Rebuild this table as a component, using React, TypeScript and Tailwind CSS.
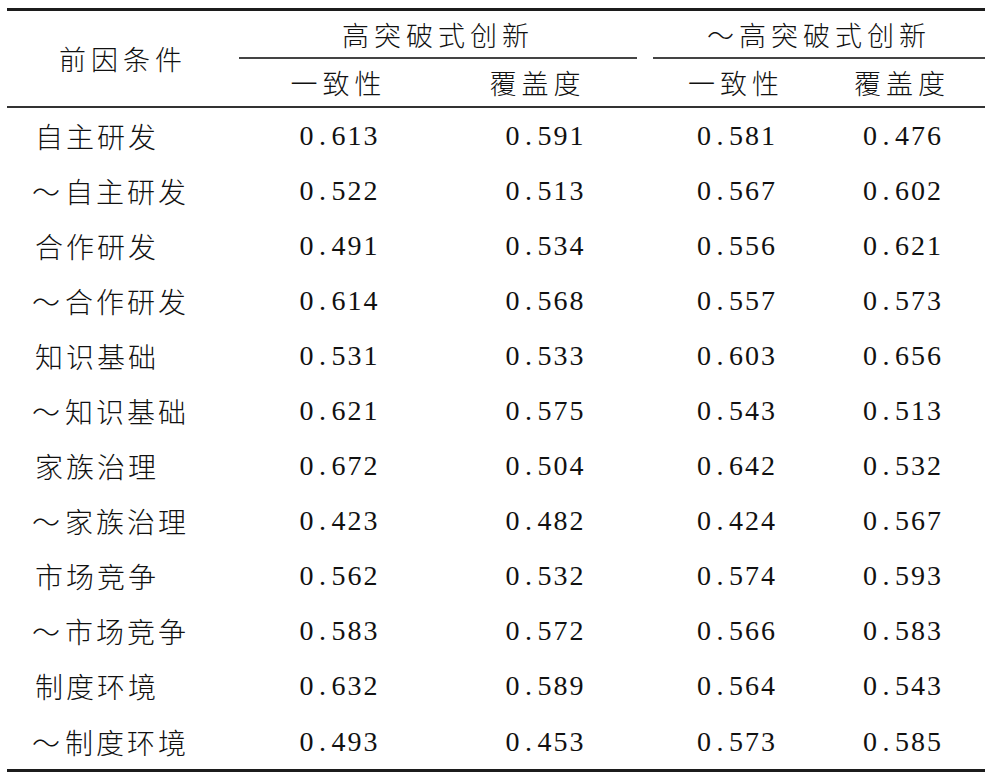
import React from "react";

const cjk = { fontFamily: '"Noto Sans CJK SC", "Noto Sans", sans-serif' };
const serif = { fontFamily: '"Liberation Serif", Tinos, "DejaVu Serif", serif' };

const rows: [string, string, string, string, string][] = [
  ["自主研发", "0.613", "0.591", "0.581", "0.476"],
  ["～自主研发", "0.522", "0.513", "0.567", "0.602"],
  ["合作研发", "0.491", "0.534", "0.556", "0.621"],
  ["～合作研发", "0.614", "0.568", "0.557", "0.573"],
  ["知识基础", "0.531", "0.533", "0.603", "0.656"],
  ["～知识基础", "0.621", "0.575", "0.543", "0.513"],
  ["家族治理", "0.672", "0.504", "0.642", "0.532"],
  ["～家族治理", "0.423", "0.482", "0.424", "0.567"],
  ["市场竞争", "0.562", "0.532", "0.574", "0.593"],
  ["～市场竞争", "0.583", "0.572", "0.566", "0.583"],
  ["制度环境", "0.632", "0.589", "0.564", "0.543"],
  ["～制度环境", "0.493", "0.453", "0.573", "0.585"],
];

function Num({ v }: { v: string }) {
  return (
    <span className="flex font-normal text-[28px] leading-none text-[#111]" style={serif}>
      {v.split("").map((c, i) => (
        <span key={i} className="inline-block w-4 text-center" style={serif}>
          {c}
        </span>
      ))}
    </span>
  );
}

function Label({ t }: { t: string }) {
  const tilde = t.startsWith("～");
  return (
    <span className="flex items-center text-[28px] font-light leading-none tracking-[3px] text-[#111]" style={cjk}>
      {tilde ? <span className="inline-block w-[33px] -ml-[3px]">～</span> : null}
      <span>{tilde ? t.slice(1) : t}</span>
    </span>
  );
}

const head = "flex items-center justify-center text-[27px] font-light leading-none tracking-[5px] text-[#111]";

export default function App() {
  return (
    <div className="min-h-[784px] w-[992px] bg-white pt-2 pl-[7px]">
      <div className="w-[978px]">
        <div className="h-[3px] bg-[#1c1c1c]" />
        <div className="grid grid-cols-[232px_199px_199px_16px_166px_166px] grid-rows-[46px_2px_47px]">
          <div className={`row-span-3 ${head}`} style={cjk}>
            前因条件
          </div>
          <div className={`col-span-2 ${head}`} style={cjk}>
            高突破式创新
          </div>
          <div />
          <div className={`col-span-2 ${head}`} style={cjk}>
            ～高突破式创新
          </div>
          <div className="col-span-2 bg-[#444]" />
          <div />
          <div className="col-span-2 bg-[#444]" />
          <div className={head} style={cjk}>
            一致性
          </div>
          <div className={head} style={cjk}>
            覆盖度
          </div>
          <div />
          <div className={head} style={cjk}>
            一致性
          </div>
          <div className={head} style={cjk}>
            覆盖度
          </div>
        </div>
        <div className="h-[2px] bg-[#333]" />
        <div className="grid grid-cols-[232px_199px_199px_16px_166px_166px] auto-rows-[55.1px]">
          {rows.map((r) => (
            <React.Fragment key={r[0]}>
              <div className="flex items-center pl-[28px]">
                <Label t={r[0]} />
              </div>
              <div className="flex items-center justify-center">
                <Num v={r[1]} />
              </div>
              <div className="flex items-center justify-center pl-[14px]">
                <Num v={r[2]} />
              </div>
              <div />
              <div className="flex items-center justify-center">
                <Num v={r[3]} />
              </div>
              <div className="flex items-center justify-center">
                <Num v={r[4]} />
              </div>
            </React.Fragment>
          ))}
        </div>
        <div className="h-[3px] bg-[#1c1c1c]" />
      </div>
    </div>
  );
}
